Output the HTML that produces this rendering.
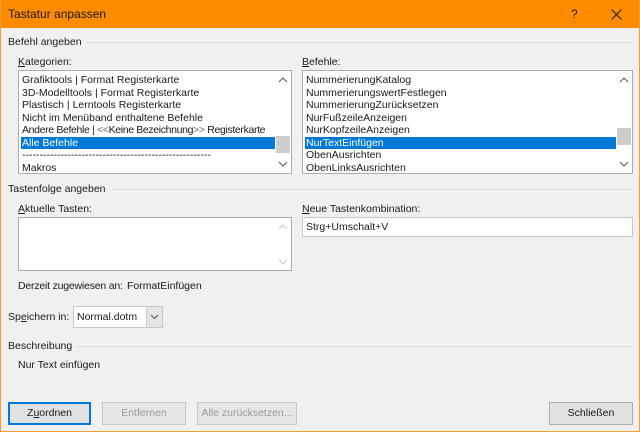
<!DOCTYPE html>
<html><head><meta charset="utf-8"><style>
*{box-sizing:border-box;margin:0;padding:0}
body{width:640px;height:432px;overflow:hidden;background:#f0f0f0;font-family:"Liberation Sans",sans-serif;font-size:10.5px;color:#1a1a1a;position:relative}
.a{position:absolute;white-space:nowrap}
.win{position:absolute;left:0;top:0;width:640px;height:432px;border:1px solid #f0a030;border-top:none}
.title{position:absolute;left:0;top:0;width:640px;height:28px;background:#ff8c00}
.hr{position:absolute;height:1px;background:#dcdcdc}
.box{position:absolute;background:#fff;border:1px solid #abadb3;overflow:hidden}
.row{position:absolute;left:2px;height:12.5px;line-height:12.5px;padding-left:1px;white-space:nowrap}
.sel{background:#0078d7;color:#fff}
.sb{position:absolute;right:0;top:0;width:16px;height:100%;background:#fff}
.btn{position:absolute;height:23px;background:#e1e1e1;border:1px solid #adadad;text-align:center;line-height:21px}
.dis{color:#9a9a9a;background:#e6e6e6;border-color:#c8c8c8}
u{text-decoration:underline}
</style></head><body>
<div class="title"></div>
<div class="win"></div>
<div class="a" style="left:8px;top:7px;font-size:12px">Tastatur anpassen</div>
<div class="a" style="left:571px;top:7px;font-size:12px">?</div>
<svg class="a" style="left:611px;top:9px" width="11" height="11"><path d="M0.5 0.5L10.5 10.5M10.5 0.5L0.5 10.5" stroke="#222" stroke-width="1.1"/></svg>

<div class="a" style="left:8px;top:36px">Befehl angeben</div><div class="hr" style="left:86px;top:42px;width:546px"></div>
<div class="a" style="left:18px;top:56px"><u>K</u>ategorien:</div>
<div class="box" style="left:18px;top:70px;width:274px;height:104px">
 <div class="row" style="top:3px">Grafiktools | Format Registerkarte</div>
 <div class="row" style="top:15.5px">3D-Modelltools | Format Registerkarte</div>
 <div class="row" style="top:28px">Plastisch | Lerntools Registerkarte</div>
 <div class="row" style="top:40.5px">Nicht im Menüband enthaltene Befehle</div>
 <div class="row" style="top:53px;letter-spacing:-0.35px">Andere Befehle | <span style="color:#666">&lt;&lt;</span>Keine Bezeichnung<span style="color:#666">&gt;&gt;</span> Registerkarte</div>
 <div class="row sel" style="top:65.5px;width:255px">Alle Befehle</div>
 <div class="row" style="top:78px">------------------------------------------------------</div>
 <div class="row" style="top:90.5px">Makros</div>
 <div class="sb"><div class="a" style="left:1px;top:65px;width:14px;height:17px;background:#cdcdcd"></div>
 <svg class="a" style="left:3px;top:5px" width="10" height="8"><path d="M1 6l4-4 4 4" fill="none" stroke="#555"/></svg>
 <svg class="a" style="left:3px;top:89px" width="10" height="8"><path d="M1 2l4 4 4-4" fill="none" stroke="#555"/></svg></div>
</div>

<div class="a" style="left:302px;top:56px"><u>B</u>efehle:</div>
<div class="box" style="left:302px;top:70px;width:331px;height:104px">
 <div class="row" style="top:3px">NummerierungKatalog</div>
 <div class="row" style="top:15.5px">NummerierungswertFestlegen</div>
 <div class="row" style="top:28px">NummerierungZurücksetzen</div>
 <div class="row" style="top:40.5px">NurFußzeileAnzeigen</div>
 <div class="row" style="top:53px">NurKopfzeileAnzeigen</div>
 <div class="row sel" style="top:65.5px;width:312px">NurTextEinfügen</div>
 <div class="row" style="top:78px">ObenAusrichten</div>
 <div class="row" style="top:90.5px">ObenLinksAusrichten</div>
 <div class="sb"><div class="a" style="left:1px;top:57px;width:14px;height:17px;background:#cdcdcd"></div>
 <svg class="a" style="left:3px;top:5px" width="10" height="8"><path d="M1 6l4-4 4 4" fill="none" stroke="#555"/></svg>
 <svg class="a" style="left:3px;top:89px" width="10" height="8"><path d="M1 2l4 4 4-4" fill="none" stroke="#555"/></svg></div>
</div>

<div class="a" style="left:8px;top:183px">Tastenfolge angeben</div><div class="hr" style="left:112px;top:189px;width:520px"></div>
<div class="a" style="left:18px;top:203px"><u>A</u>ktuelle Tasten:</div>
<div class="box" style="left:18px;top:217px;width:274px;height:54px"><div class="sb">
 <svg class="a" style="left:3px;top:5px" width="10" height="8"><path d="M1 6l4-4 4 4" fill="none" stroke="#ccc"/></svg>
 <svg class="a" style="left:3px;top:40px" width="10" height="8"><path d="M1 2l4 4 4-4" fill="none" stroke="#ccc"/></svg></div></div>
<div class="a" style="left:302px;top:203px"><u>N</u>eue Tastenkombination:</div>
<div class="box" style="left:302px;top:217px;width:331px;height:20px;border-color:#c8c8c8"><div class="a" style="left:3px;top:3px">Strg+Umschalt+V</div></div>
<div class="a" style="left:18px;top:280px;letter-spacing:-0.2px">Derzeit zugewiesen an:</div>
<div class="a" style="left:127px;top:280px">FormatEinfügen</div>
<div class="a" style="left:8px;top:311px">Sp<u>e</u>ichern in:</div>
<div class="box" style="left:73px;top:306px;width:90px;height:22px;border-color:#c8c8c8"><div class="a" style="left:3px;top:4px">Normal.dotm</div>
 <div class="a" style="left:72px;top:0;width:16px;height:20px;background:#e5e5e5;border-left:1px solid #ccc"><svg width="16" height="20"><path d="M4 8l3.5 3.5L11 8" fill="none" stroke="#555"/></svg></div></div>
<div class="a" style="left:8px;top:340px">Beschreibung</div><div class="hr" style="left:76px;top:346px;width:556px"></div>
<div class="a" style="left:18px;top:359px">Nur Text einfügen</div>

<div class="btn" style="left:8px;top:402px;width:83px;border:2px solid #0078d7;line-height:19px">Z<u>u</u>ordnen</div>
<div class="btn dis" style="left:102px;top:402px;width:84px">Entfernen</div>
<div class="btn dis" style="left:197px;top:402px;width:100px">Alle zurücksetzen...</div>
<div class="btn" style="left:549px;top:402px;width:84px">Schließen</div>
</body></html>
